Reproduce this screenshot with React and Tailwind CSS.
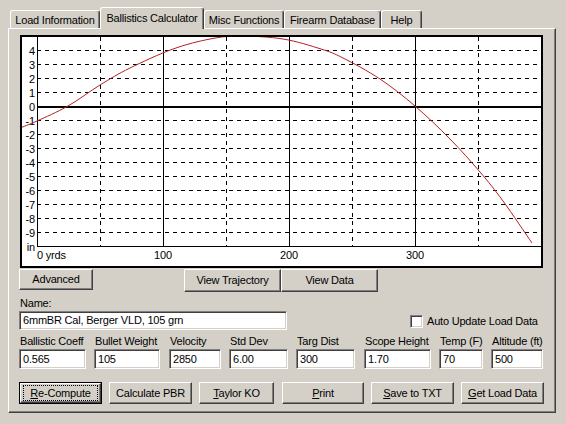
import React from 'react';

const raised =
  'bg-[#D4D0C8] border border-t-white border-l-white border-r-[#404040] border-b-[#404040] shadow-[inset_-1px_-1px_#808080,inset_1px_1px_#D4D0C8]';
const sunken =
  'bg-white border border-t-[#808080] border-l-[#808080] border-r-white border-b-white shadow-[inset_1px_1px_#404040,inset_-1px_-1px_#D4D0C8]';

// chart geometry (pixels inside the 2px frame)
const AXIS_X = 15;
const TOP_Y = 13;
const STEP = 14;
const BOTTOM_Y = 209;
const V_SOLID = [141, 267, 393];
const V_DASHED = [78, 204, 330, 456];
const TICKS = ['4', '3', '2', '1', '0', '-1', '-2', '-3', '-4', '-5', '-6', '-7', '-8', '-9'];

// trajectory sampled in window coordinates
const PATH_PTS = [
  [20, 128], [37, 121], [68, 106], [100, 85], [130, 68], [173, 49], [210, 39], [240, 36],
  [283, 39], [321, 49], [343, 58], [380, 79], [415, 106], [450, 139], [480, 172], [503, 201], [532, 243],
].map(([x, y]) => [x - 22, y - 37]);

function smoothPath(pts) {
  let d = `M${pts[0][0]},${pts[0][1]}`;
  for (let i = 0; i < pts.length - 1; i++) {
    const p0 = pts[i - 1] || pts[i];
    const p1 = pts[i];
    const p2 = pts[i + 1];
    const p3 = pts[i + 2] || p2;
    const c1 = [p1[0] + (p2[0] - p0[0]) / 6, p1[1] + (p2[1] - p0[1]) / 6];
    const c2 = [p2[0] - (p3[0] - p1[0]) / 6, p2[1] - (p3[1] - p1[1]) / 6];
    d += ` C${c1[0]},${c1[1]} ${c2[0]},${c2[1]} ${p2[0]},${p2[1]}`;
  }
  return d;
}

function Chart() {
  return (
    <div className="ml-px w-[523px] h-[233px] border-2 border-black bg-white">
      <svg width="519" height="229" className="block" fontFamily="Liberation Sans, Arial, sans-serif" fontSize="11">
        {TICKS.map((t, i) => (
          <g key={t}>
            {t !== '0' && (
              <line x1={AXIS_X} x2="519" y1={TOP_Y + i * STEP + 0.5} y2={TOP_Y + i * STEP + 0.5} stroke="#000" strokeDasharray="4 4" />
            )}
            <text x="13" y={TOP_Y + i * STEP + 4.5} textAnchor="end" fill="#000">{t}</text>
          </g>
        ))}
        <text x="13" y={BOTTOM_Y + 4.5} textAnchor="end" fill="#000">in</text>
        {V_DASHED.map(x => (
          <line key={x} x1={x + 0.5} x2={x + 0.5} y1="0" y2={BOTTOM_Y} stroke="#000" strokeDasharray="4 4" />
        ))}
        {V_SOLID.map(x => (
          <line key={x} x1={x + 0.5} x2={x + 0.5} y1="0" y2={BOTTOM_Y} stroke="#000" />
        ))}
        <line x1={AXIS_X + 0.5} x2={AXIS_X + 0.5} y1="0" y2={BOTTOM_Y + 1} stroke="#000" />
        <line x1={AXIS_X} x2="519" y1={BOTTOM_Y + 0.5} y2={BOTTOM_Y + 0.5} stroke="#000" />
        <line x1={AXIS_X} x2="519" y1={TOP_Y + 4 * STEP + 1} y2={TOP_Y + 4 * STEP + 1} stroke="#000" strokeWidth="2" />
        <text x="15" y="222" fill="#000">0 yrds</text>
        <text x="141" y="222" textAnchor="middle" fill="#000">100</text>
        <text x="267" y="222" textAnchor="middle" fill="#000">200</text>
        <text x="393" y="222" textAnchor="middle" fill="#000">300</text>
        <path d={smoothPath(PATH_PTS)} fill="none" stroke="#B22222" strokeWidth="1" />
      </svg>
    </div>
  );
}

function Tab({ label, active, width }) {
  if (active) {
    return (
      <div
        className={`relative z-10 -mb-px h-[22px] ${width} flex items-center justify-center bg-[#D4D0C8] border-t border-l border-r border-t-white border-l-white border-r-[#404040] rounded-t-[3px] shadow-[inset_-1px_0_#808080]`}
      >
        {label}
      </div>
    );
  }
  return (
    <div
      className={`h-[18px] ${width} flex items-center justify-center pt-[2px] border-t border-l border-r border-t-white border-l-white border-r-[#404040] rounded-t-[3px] shadow-[inset_-1px_0_#808080]`}
    >
      {label}
    </div>
  );
}

function Button({ children, className }) {
  return <div className={`${raised} flex items-center justify-center ${className}`}>{children}</div>;
}

function Field({ label, value, width, ml }) {
  return (
    <div className={`flex flex-col ${ml}`}>
      <div className="h-[13px] leading-[13px] pl-px whitespace-nowrap">{label}</div>
      <div className={`${sunken} mt-px h-[20px] ${width} flex items-center pl-[3px]`}>{value}</div>
    </div>
  );
}

export default function App() {
  return (
    <div className="w-[566px] h-[424px] bg-[#D4D0C8] text-black text-[11px] tracking-[-0.2px] font-['Liberation_Sans',Arial,sans-serif] overflow-hidden">
      {/* tab strip */}
      <div className="flex items-end pt-[7px] pl-[10px] h-[28px]">
        <Tab label="Load Information" width="w-[90px]" />
        <Tab label="Ballistics Calculator" width="w-[104px]" active />
        <Tab label="Misc Functions" width="w-[80px]" />
        <Tab label="Firearm Database" width="w-[97px]" />
        <Tab label="Help" width="w-[41px]" />
      </div>

      {/* tab page */}
      <div className="ml-[8px] w-[548px] h-[385px] border border-t-white border-l-white border-r-[#404040] border-b-[#404040] shadow-[inset_-1px_-1px_#808080] pl-[10px] pt-[6px]">
        <Chart />

        <div className="flex items-start mt-px">
          <Button className="w-[74px] h-[21px]">Advanced</Button>
          <Button className="ml-[91px] w-[97px] h-[23px]">View Trajectory</Button>
          <Button className="w-[97px] h-[23px]">View Data</Button>
        </div>

        <div className="mt-[5px] h-[13px] leading-[13px] pl-px">Name:</div>
        <div className="mt-px flex items-center">
          <div className={`${sunken} w-[268px] h-[19px] flex items-center pl-[3px]`}>6mmBR Cal, Berger VLD, 105 grn</div>
          <div className={`${sunken} ml-[123px] mt-[2px] w-[13px] h-[13px]`} />
          <div className="ml-[4px] mt-[1px]">Auto Update Load Data</div>
        </div>

        <div className="mt-[5px] flex">
          <Field label="Ballistic Coeff" value="0.565" width="w-[67px]" ml="ml-0" />
          <Field label="Bullet Weight" value="105" width="w-[66px]" ml="ml-[8px]" />
          <Field label="Velocity" value="2850" width="w-[52px]" ml="ml-[9px]" />
          <Field label="Std Dev" value="6.00" width="w-[59px]" ml="ml-[8px]" />
          <Field label="Targ Dist" value="300" width="w-[59px]" ml="ml-[8px]" />
          <Field label="Scope Height" value="1.70" width="w-[67px]" ml="ml-[9px]" />
          <Field label="Temp (F)" value="70" width="w-[44px]" ml="ml-[8px]" />
          <Field label="Altitude (ft)" value="500" width="w-[52px]" ml="ml-[8px]" />
        </div>

        <div className="mt-[13px] flex items-start">
          <div className="w-[83px] h-[22px] border border-black flex">
            <div className={`${raised} flex-1 flex`}>
              <div className="flex-1 mx-[2px] my-px border border-dotted border-black flex items-center justify-center">
                <span><span className="underline">R</span>e-Compute</span>
              </div>
            </div>
          </div>
          <Button className="ml-[7px] w-[83px] h-[22px]">Calculate PBR</Button>
          <Button className="ml-[7px] w-[75px] h-[22px]">
            <span><span className="underline">T</span>aylor KO</span>
          </Button>
          <Button className="ml-[8px] w-[82px] h-[22px]">
            <span><span className="underline">P</span>rint</span>
          </Button>
          <Button className="ml-[7px] w-[83px] h-[22px]">
            <span><span className="underline">S</span>ave to TXT</span>
          </Button>
          <Button className="ml-[7px] w-[83px] h-[22px]">
            <span><span className="underline">G</span>et Load Data</span>
          </Button>
        </div>
      </div>
    </div>
  );
}
